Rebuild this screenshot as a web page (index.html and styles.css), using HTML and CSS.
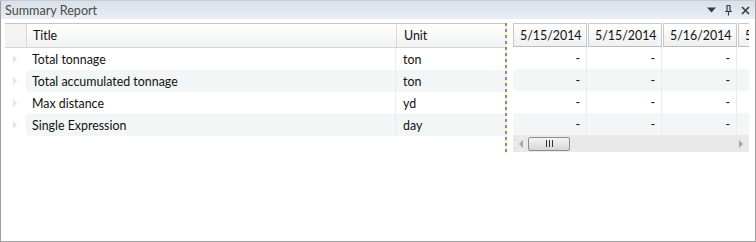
FILE: index.html
```html
<!DOCTYPE html>
<html lang="en">
<head>
    <meta charset="UTF-8">
    <title>Summary Report</title>
    <link rel="stylesheet" href="styles.css">
</head>
<body>
    <div class="window">
        <div class="titlebar">
            <span class="caption">Summary Report</span>
            <div class="tools">
                <svg width="9" height="6" viewBox="0 0 9 6"><path d="M0 0.5h9L4.5 5.5z" fill="#3c3c3c"/></svg>
                <svg width="9" height="11" viewBox="0 0 9 11"><path d="M2.5 0.5h4M3 0.5v6M6 0.5v6M1 6.5h7M4.5 6.5v4" stroke="#3c3c3c" stroke-width="1.2" fill="none"/></svg>
                <svg width="9" height="9" viewBox="0 0 9 9"><path d="M1 1L8 8M8 1L1 8" stroke="#3c3c3c" stroke-width="1.6"/></svg>
            </div>
        </div>

        <div class="grid">
            <!-- frozen columns -->
            <div class="frozen">
                <div class="head">
                    <div class="c-rh"></div>
                    <div class="c-title">Title</div>
                    <div class="c-unit">Unit</div>
                </div>
                <div class="row">
                    <div class="c-rh"><span class="tri"></span></div>
                    <div class="c-title">Total tonnage</div>
                    <div class="c-unit">ton</div>
                </div>
                <div class="row alt">
                    <div class="c-rh"><span class="tri"></span></div>
                    <div class="c-title">Total accumulated tonnage</div>
                    <div class="c-unit">ton</div>
                </div>
                <div class="row">
                    <div class="c-rh"><span class="tri"></span></div>
                    <div class="c-title">Max distance</div>
                    <div class="c-unit">yd</div>
                </div>
                <div class="row alt">
                    <div class="c-rh"><span class="tri"></span></div>
                    <div class="c-title">Single Expression</div>
                    <div class="c-unit">day</div>
                </div>
            </div>

            <div class="splitter"></div>

            <!-- scrolling columns -->
            <div class="scroll">
                <div class="viewport">
                    <div class="dhead">
                        <div class="dcell">5/15/2014</div>
                        <div class="dcell">5/15/2014</div>
                        <div class="dcell">5/16/2014</div>
                        <div class="dcell">5/16/2014</div>
                    </div>
                    <div class="drow">
                        <div class="vcell">-</div><div class="vcell">-</div><div class="vcell">-</div><div class="vcell">-</div>
                    </div>
                    <div class="drow alt">
                        <div class="vcell">-</div><div class="vcell">-</div><div class="vcell">-</div><div class="vcell">-</div>
                    </div>
                    <div class="drow">
                        <div class="vcell">-</div><div class="vcell">-</div><div class="vcell">-</div><div class="vcell">-</div>
                    </div>
                    <div class="drow alt">
                        <div class="vcell">-</div><div class="vcell">-</div><div class="vcell">-</div><div class="vcell">-</div>
                    </div>
                </div>
                <div class="hscroll">
                    <span class="arrow left"></span>
                    <div class="thumb"><span class="grip"></span></div>
                    <span class="arrow right"></span>
                </div>
            </div>
        </div>
    </div>
</body>
</html>
```

FILE: styles.css
```css
body {
    margin: 0;
    font-family: Lato, "Open Sans", sans-serif;
    font-size: 12.4px;
    color: #111;
    background: #fff;
}

.window {
    width: 756px;
    height: 242px;
    box-sizing: border-box;
    border: 1px solid #a0a0a0;
    border-top-color: #c8ccd2;
    overflow: hidden;
}

.titlebar {
    height: 18px;
    display: flex;
    align-items: center;
    justify-content: space-between;
    padding: 0 5px 0 4px;
    background: linear-gradient(#d9e0ea, #e9eef4);
}

.caption {
    font-size: 12.6px;
    color: #4a4a4a;
}

.tools {
    display: flex;
    align-items: center;
    gap: 8px;
}

.grid {
    display: flex;
    margin-top: 4px;
    padding-left: 4px;
}

.frozen {
    width: 500px;
}

.head {
    display: flex;
    height: 23px;
    border-top: 1px solid #c4c4c4;
    border-bottom: 1px solid #d4d4d4;
    background: linear-gradient(#ffffff, #f1f2f3);
}

.head > div {
    display: flex;
    align-items: center;
    border-right: 1px solid #d8d8d8;
}

.head .c-rh {
    background: #f3f3f3;
}

.head .c-unit {
    border-right: none;
}

.c-rh {
    width: 21px;
    flex: none;
}

.c-title {
    width: 363px;
    padding-left: 6px;
    flex: none;
}

.c-unit {
    flex: 1;
    padding-left: 7px;
}

.row {
    display: flex;
    height: 22px;
    align-items: stretch;
}

.row > div {
    display: flex;
    align-items: center;
}

.row .c-title {
    border-right: 1px solid #ececec;
}

.row.alt .c-title,
.row.alt .c-unit {
    background: #f3f6f7;
}

.row.alt .c-title {
    border-radius: 3px 0 0 3px;
}

.tri {
    margin-left: 8px;
    width: 0;
    height: 0;
    border-top: 4px solid transparent;
    border-bottom: 4px solid transparent;
    border-left: 4px solid #e4e4e4;
}

.splitter {
    width: 2px;
    height: 130px;
    flex: none;
    background: repeating-linear-gradient(#8282f4 0 3px, #fcfc86 3px 6px);
}

.scroll {
    margin-left: 6px;
    width: 236px;
}

.viewport {
    width: 236px;
    overflow: hidden;
}

.dhead,
.drow {
    display: flex;
    width: 320px;
}

.dhead {
    gap: 1px;
    height: 24px;
}

.dcell {
    width: 74px;
    flex: none;
    border: 1px solid #c8c8c8;
    border-bottom-color: #bdbdbd;
    background: linear-gradient(#ffffff, #eff0f1);
    padding-left: 6px;
    display: flex;
    align-items: center;
    box-sizing: border-box;
    white-space: nowrap;
    overflow: hidden;
}

.drow {
    height: 22px;
    gap: 1px;
}

.drow.alt {
    background: #f3f6f7;
    border-radius: 3px 0 0 3px;
}

.vcell {
    width: 74px;
    flex: none;
    display: flex;
    align-items: center;
    justify-content: flex-end;
    padding-right: 6px;
    box-sizing: border-box;
    border-right: 1px solid #ececec;
}

.hscroll {
    height: 17px;
    background: #e9e9e9;
    display: flex;
    align-items: center;
}

.thumb {
    width: 40px;
    height: 12px;
    margin-left: 5px;
    border: 1px solid #8d8d8d;
    border-radius: 2px;
    background: linear-gradient(#f4f4f4, #d6d6d6);
    display: flex;
    justify-content: center;
    align-items: center;
}

.grip {
    width: 7px;
    height: 7px;
    background: repeating-linear-gradient(to right, #333 0 1px, transparent 1px 3px);
}

.arrow {
    width: 0;
    height: 0;
    border-top: 4px solid transparent;
    border-bottom: 4px solid transparent;
}

.arrow.left {
    margin-left: 6px;
    border-right: 4px solid #a8a8a8;
}

.arrow.right {
    margin-left: auto;
    margin-right: 6px;
    border-left: 4px solid #a8a8a8;
}
```
